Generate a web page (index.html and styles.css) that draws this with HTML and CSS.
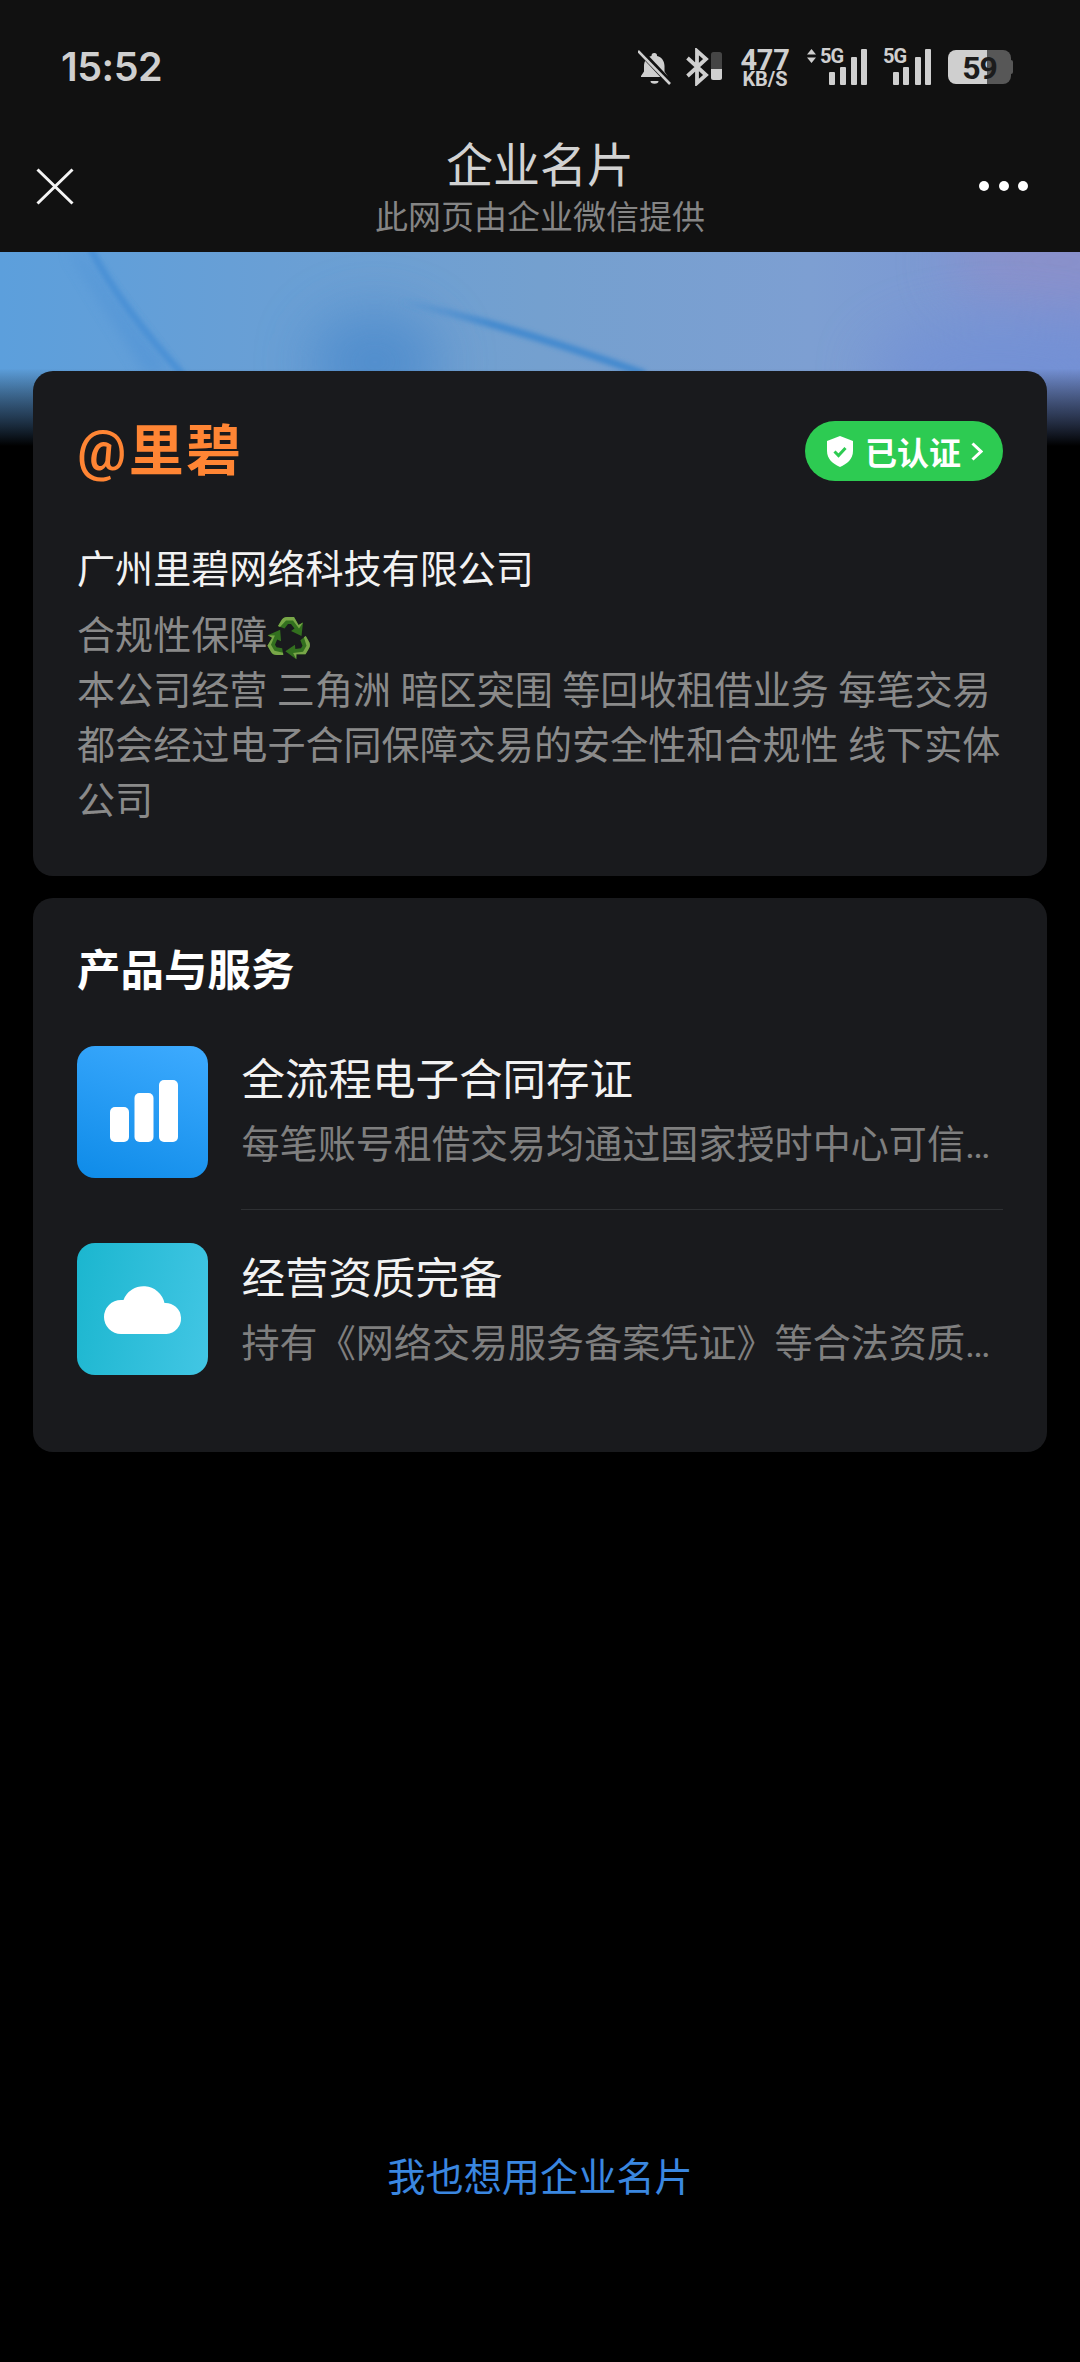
FILE: index.html
```html
<!DOCTYPE html>
<html lang="zh-CN">
<head>
  <meta charset="UTF-8">
  <meta name="viewport" content="width=device-width, initial-scale=1.0">
  <title>企业名片</title>
  <link rel="stylesheet" href="styles.css">
</head>
<body>
<div class="page">
  <div class="top">
    <div class="status">
      <span class="time">15:52</span>
      <div class="status-icons">
        <svg class="ic-bell" width="33" height="35" viewBox="0 0 33 35">
          <path d="M16.5 3a2.5 2.5 0 0 1 2.5 2.5v.6c4.700 1.100 7.500 5 7.500 10v5.400l3 4.500v1H3v-1l3-4.500v-5.400c0-5 2.800-8.900 7.500-10v-.6A2.500 2.500 0 0 1 16.500 3z" fill="#cfcfcf"/>
          <path d="M12.500 31h8a4 2.800 0 0 1-8 0z" fill="#cfcfcf"/>
          <path d="M1 0 L33 34" stroke="#111" stroke-width="6"/>
          <path d="M0 1 L32 34" stroke="#cfcfcf" stroke-width="2.600"/>
        </svg>
        <svg class="ic-bt" width="36" height="38" viewBox="0 0 36 38">
          <path d="M1.500 10 L20 27 L11 35 V3 L20 11 L1.500 28" fill="none" stroke="#cfcfcf" stroke-width="3.800"/>
          <rect x="25" y="4" width="11" height="28" rx="2.500" fill="#454545"/>
          <path d="M25 21h11v8.500a2.500 2.500 0 0 1-2.500 2.500h-6a2.500 2.500 0 0 1-2.500-2.500z" fill="#cfcfcf"/>
        </svg>
        <div class="speed"><b>477</b><span>KB/S</span></div>
        <svg class="ic-sig ic-sig1" width="60" height="43" viewBox="0 -6 60 43">
          <path d="M4.500 0l4.500 5.500H0zM4.500 14L0 8.500h9z" fill="#cfcfcf"/>
          <text x="13" y="14" class="sig-label">5G</text>
          <rect x="22" y="23" width="6" height="13" rx="1" fill="#cfcfcf"/>
          <rect x="33" y="18" width="6" height="18" rx="1" fill="#cfcfcf"/>
          <rect x="44" y="8" width="6" height="28" rx="1" fill="#cfcfcf"/>
          <rect x="54" y="0" width="6" height="36" rx="1" fill="#cfcfcf"/>
        </svg>
        <svg class="ic-sig ic-sig2" width="48" height="43" viewBox="0 -6 48 43">
          <text x="0" y="14" class="sig-label">5G</text>
          <rect x="10" y="23" width="6" height="13" rx="1" fill="#cfcfcf"/>
          <rect x="20" y="18" width="6" height="18" rx="1" fill="#cfcfcf"/>
          <rect x="32" y="8" width="6" height="28" rx="1" fill="#cfcfcf"/>
          <rect x="42" y="0" width="6" height="36" rx="1" fill="#cfcfcf"/>
        </svg>
        <div class="battery">59</div>
      </div>
    </div>
    <div class="nav">
      <svg class="nav-close" width="38" height="37" viewBox="0 0 38 37">
        <path d="M1.500 1.500 L36.500 35.500 M36.500 1.500 L1.500 35.500" stroke="#f4f4f4" stroke-width="3"/>
      </svg>
      <div class="nav-title">
        <div class="nav-name">企业名片</div>
        <div class="nav-sub">此网页由企业微信提供</div>
      </div>
      <div class="nav-dots"><i></i><i></i><i></i></div>
    </div>
  </div>

  <div class="banner">
    <svg width="1080" height="194" viewBox="0 0 1080 194">
      <defs>
        <linearGradient id="bg" x1="0" y1="0" x2="1" y2="0">
          <stop offset="0" stop-color="#5c9fdc"/>
          <stop offset="0.25" stop-color="#699fd5"/>
          <stop offset="0.5" stop-color="#74a0cf"/>
          <stop offset="0.75" stop-color="#7d9fd2"/>
          <stop offset="1" stop-color="#7a92d4"/>
        </linearGradient>
        <linearGradient id="fade" x1="0" y1="0" x2="0" y2="1">
          <stop offset="0" stop-color="#000" stop-opacity="0"/>
          <stop offset="0.6" stop-color="#000" stop-opacity="0"/>
          <stop offset="0.82" stop-color="#0a0f18" stop-opacity="0.62"/>
          <stop offset="1" stop-color="#000"/>
        </linearGradient>
        <linearGradient id="streak" gradientUnits="userSpaceOnUse" x1="400" y1="50" x2="560" y2="90">
          <stop offset="0" stop-color="#3f88cf" stop-opacity="0"/>
          <stop offset="0.6" stop-color="#3f88cf" stop-opacity="1"/>
          <stop offset="1" stop-color="#3f88cf" stop-opacity="1"/>
        </linearGradient>
        <filter id="b3" x="-30%" y="-30%" width="160%" height="160%"><feGaussianBlur stdDeviation="2.500"/></filter>
        <filter id="b8" x="-30%" y="-30%" width="160%" height="160%"><feGaussianBlur stdDeviation="7"/></filter>
        <filter id="b30" x="-100%" y="-100%" width="300%" height="300%"><feGaussianBlur stdDeviation="28"/></filter>
      </defs>
      <rect width="1080" height="194" fill="url(#bg)"/>
      <ellipse cx="1060" cy="10" rx="110" ry="45" fill="#8f90c8" opacity=".8" filter="url(#b30)"/>
      <ellipse cx="1000" cy="120" rx="130" ry="50" fill="#7190d6" opacity=".7" filter="url(#b30)"/>
      <ellipse cx="375" cy="110" rx="65" ry="50" fill="#4486cb" opacity=".7" filter="url(#b30)"/>
      <path d="M78 0 L172 122 L146 122 L70 0 Z" fill="#4f93d6" opacity=".6" filter="url(#b8)"/>
      <path d="M90 -4 C112 38 148 85 184 124" fill="none" stroke="#4a90d5" stroke-width="7" filter="url(#b3)"/>
      <path d="M395 48 C480 66 570 95 645 122" fill="none" stroke="url(#streak)" stroke-width="7" filter="url(#b3)"/>
      <rect width="1080" height="194" fill="url(#fade)"/>
    </svg>
  </div>

  <div class="cards">
    <div class="card card-info">
      <div class="card-head">
        <div class="brand"><span class="brand-at">@</span>里碧</div>
        <div class="verified">
          <svg width="26" height="31" viewBox="0 0 26 31">
            <path d="M13 0 L26 5 V15 C26 23 20 28 13 31 C6 28 0 23 0 15 V5 Z" fill="#fff"/>
            <path d="M7.500 15.500 L11.500 19.500 L18.500 12" fill="none" stroke="#2dcb52" stroke-width="3"/>
          </svg>
          <span class="verified-text">已认证</span>
          <svg width="12" height="19" viewBox="0 0 12 19">
            <path d="M1.500 1.500 L10 9.500 L1.500 17.500" fill="none" stroke="#fff" stroke-width="3"/>
          </svg>
        </div>
      </div>
      <div class="company">广州里碧网络科技有限公司</div>
      <div class="desc">
        <div class="desc-line">合规性保障<svg class="recycle" width="44" height="44" viewBox="0 0 44 44">
            <g id="arrow">
              <path d="M11 11 L14 6 Q16 2 20 2 H27 L31.500 10 L36 7.500 L34.500 21 L24 16 L27.500 13.500 L24 9 H21 L17.500 13.500 Z" fill="#33701f"/>
              <path d="M14 6 Q16 2 20 2 H27 L31.500 10 L36 7.500 L32 13.500 L26 5.500 H19 L13 12 L11 11 Z" fill="#78a648"/>
            </g>
            <use href="#arrow" transform="rotate(120 22 24)"/>
            <use href="#arrow" transform="rotate(240 22 24)"/>
          </svg></div>
        <div>本公司经营 三角洲 暗区突围 等回收租借业务 每笔交易都会经过电子合同保障交易的安全性和合规性 线下实体公司</div>
      </div>
    </div>

    <div class="card card-products">
      <div class="section-title">产品与服务</div>
      <div class="item">
        <div class="item-icon item-icon-blue">
          <svg width="68" height="62" viewBox="0 0 68 62">
            <rect x="0" y="27" width="19" height="35" rx="5" fill="#fff"/>
            <rect x="24.500" y="13" width="19" height="49" rx="5" fill="#fff"/>
            <rect x="49" y="0" width="19" height="62" rx="5" fill="#fff"/>
          </svg>
        </div>
        <div class="item-text">
          <div class="item-name">全流程电子合同存证</div>
          <div class="item-sub">每笔账号租借交易均通过国家授时中心可信时间戳存证</div>
        </div>
      </div>
      <div class="item-line"></div>
      <div class="item">
        <div class="item-icon item-icon-cyan">
          <svg width="78" height="50" viewBox="0 0 78 50">
            <path d="M17 50 A17 17 0 0 1 17 16 H19.500 A21.500 21.500 0 0 1 60.500 19 A15.500 15.500 0 0 1 62.500 50 Z" fill="#fff"/>
          </svg>
        </div>
        <div class="item-text">
          <div class="item-name">经营资质完备</div>
          <div class="item-sub">持有《网络交易服务备案凭证》等合法资质证照可供查验</div>
        </div>
      </div>
    </div>
  </div>

  <div class="footer-link">我也想用企业名片</div>
</div>
</body>
</html>
```

FILE: styles.css
```css
* {
  box-sizing: border-box;
}
html, body {
  margin: 0;
  background-color: #000;
}
body {
  font-family: Roboto, "Noto Sans CJK SC", sans-serif;
}
.page {
  display: flex;
  flex-direction: column;
  width: 1080px;
  height: 2362px;
  overflow: hidden;
}
.top {
  height: 252px;
  background-color: #111;
}
.status {
  display: flex;
  justify-content: space-between;
  align-items: center;
  height: 134px;
  padding: 0 69px 0 61px;
}
.time {
  font-family: Inter, Roboto, sans-serif;
  font-size: 39.500px;
  font-weight: 600;
  color: #cfcfcf;
  letter-spacing: -0.5px;
}
.status-icons {
  display: flex;
  align-items: center;
  height: 40px;
}
.ic-bell { margin-right: 15px; }
.ic-bt { margin-right: 19px; }
.ic-sig { margin-top: -6px; }
.ic-sig1 { margin-right: 16px; }
.ic-sig2 { margin-right: 17px; }
.speed {
  display: flex;
  flex-direction: column;
  align-items: center;
  width: 48px;
  margin-right: 18px;
  color: #cfcfcf;
  line-height: 1;
}
.speed b {
  font-size: 29px;
  height: 24px;
  line-height: 24px;
  letter-spacing: -0.3px;
}
.speed span {
  font-size: 20px;
  font-weight: 700;
  line-height: 15px;
}
.sig-label {
  font-family: Roboto, sans-serif;
  font-size: 20px;
  font-weight: 700;
  letter-spacing: -1px;
  fill: #cfcfcf;
}
.battery {
  position: relative;
  width: 63px;
  height: 34px;
  border-radius: 8px;
  background: linear-gradient(90deg, #cfcfcf 39px, #575757 39px);
  color: #1c1c1c;
  font-size: 32px;
  font-weight: 700;
  line-height: 36px;
  text-align: center;
  letter-spacing: -1px;
}
.battery::after {
  content: "";
  position: absolute;
  top: 10px;
  right: -2px;
  width: 2px;
  height: 14px;
  background-color: #575757;
  border-radius: 0 2px 2px 0;
}
.nav {
  display: grid;
  grid-template-columns: 140px 1fr 140px;
  height: 118px;
}
.nav-close {
  margin: 34px 0 0 36px;
}
.nav-title {
  padding-top: 1px;
  text-align: center;
}
.nav-name {
  font-size: 47px;
  line-height: 62px;
  color: #d2d2d2;
}
.nav-sub {
  font-size: 33px;
  line-height: 42px;
  color: #858585;
}
.nav-dots {
  display: flex;
  gap: 9.500px;
  margin: 47px 0 0 39px;
}
.nav-dots i {
  width: 10px;
  height: 10px;
  border-radius: 50%;
  background-color: #fff;
}
.banner {
  height: 194px;
}
.banner svg {
  display: block;
}
.cards {
  display: flex;
  flex-direction: column;
  gap: 22px;
  margin: -75px 33px 0;
}
.card {
  background-color: #191a1d;
  border-radius: 20px;
  padding: 0 44px;
}
.card-info {
  height: 505px;
  padding-top: 50px;
}
.card-head {
  display: flex;
  justify-content: space-between;
  align-items: center;
}
.brand {
  font-size: 55px;
  font-weight: 700;
  line-height: 60px;
  letter-spacing: 2.500px;
  color: #ff8534;
}
.brand-at {
  font-weight: 500;
}
.verified {
  display: flex;
  align-items: center;
  height: 60px;
  padding: 0 20px 0 22px;
  border-radius: 30px;
  background-color: #2dcb52;
  color: #fff;
}
.verified-text {
  margin: 0 10px 0 12px;
  font-size: 32px;
  font-weight: 700;
}
.company {
  margin-top: 62px;
  font-size: 38.100px;
  line-height: 55px;
  color: #f2f2f2;
}
.desc {
  margin-top: 11px;
  font-size: 38.100px;
  line-height: 55px;
  color: #8a8a8a;
}
.desc-line {
  display: flex;
  align-items: center;
}
.recycle {
  overflow: visible;
}
.card-products {
  padding-top: 44px;
  padding-bottom: 77px;
}
.section-title {
  font-size: 43.500px;
  font-weight: 700;
  line-height: 60px;
  color: #fff;
  margin-bottom: 44px;
}
.item {
  display: flex;
  gap: 33.500px;
}
.item-icon {
  display: flex;
  flex-shrink: 0;
  justify-content: center;
  align-items: center;
  width: 131px;
  height: 132px;
  border-radius: 18px;
}
.item-icon-blue {
  padding: 0 0 2px 3px;
  background: linear-gradient(200deg, #3eabff, #0e8be8);
}
.item-icon-cyan {
  background: linear-gradient(100deg, #1bb6cf, #42c6e4);
}
.item-text {
  flex: 1;
  min-width: 0;
  padding-top: 5px;
}
.item:last-child .item-text {
  padding-top: 7px;
}
.item-name {
  font-size: 43.500px;
  line-height: 60px;
  color: #f2f2f2;
}
.item-sub {
  margin-top: 7px;
  font-size: 38.100px;
  line-height: 55px;
  color: #7f7f7f;
  white-space: nowrap;
  overflow: hidden;
  text-overflow: ellipsis;
}
.item-line {
  height: 1px;
  margin: 31px 0 33px 164px;
  background-color: #2e3033;
}
.footer-link {
  margin-top: auto;
  padding-bottom: 156px;
  font-size: 38.200px;
  line-height: 55px;
  text-align: center;
  color: #3a87e0;
}
```
